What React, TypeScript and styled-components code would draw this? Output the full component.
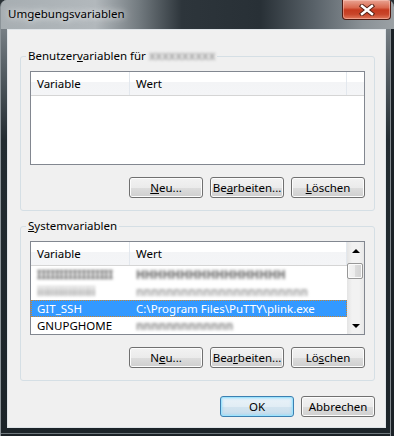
import styled, { createGlobalStyle, css } from "styled-components";

const GlobalStyle = createGlobalStyle`
  html, body {
    margin: 0;
    padding: 0;
    background: #2a3237;
  }
  body {
    font-family: "Noto Sans", "Open Sans", sans-serif;
    font-size: 11.5px;
    color: #000;
  }
  * {
    box-sizing: border-box;
  }
`;

const Window = styled.div`
  width: 394px;
  height: 436px;
  display: flex;
  flex-direction: column;
  padding: 0 8px 8px 6px;
  border-left: 1px solid #8b9398;
  border-radius: 7px 7px 0 0;
  overflow: hidden;
  background: linear-gradient(180deg, #8f969b 0px, #5d666c 60px, #232c31 140px, #1c2429 100%);
  box-shadow: inset -3px 0 0 #1a2126, inset -4px 0 0 #838b90, inset 0 -2px 0 #1a2126,
    inset 0 -3px 0 #6f787d;
`;

const TitleBar = styled.div`
  flex: none;
  height: 29px;
  margin: 0 -8px 0 -6px;
  padding: 0 3px 0 7px;
  display: flex;
  align-items: flex-start;
  justify-content: space-between;
  background: linear-gradient(
    90deg,
    #a7aeb2 0%,
    #b2b8bc 24%,
    #737b80 35%,
    #2d353b 46%,
    #283036 66%,
    #5a636a 80%,
    #8a9196 92%,
    #9ba1a5 100%
  );
`;

const Title = styled.span`
  margin-top: 6px;
  line-height: 16px;
  font-size: 11.5px;
  color: #000;
  text-shadow: 0 0 6px rgba(255, 255, 255, 0.9), 0 0 12px rgba(255, 255, 255, 0.7);
`;

const CloseButton = styled.div`
  width: 49px;
  height: 20px;
  display: flex;
  align-items: center;
  justify-content: center;
  border: 1px solid #4e1a12;
  border-top: none;
  border-radius: 0 0 4px 4px;
  background: linear-gradient(180deg, #e9a493 0%, #d9694f 40%, #c53a1f 52%, #c8452a 75%, #e0785c 100%);
  box-shadow: inset 0 0 0 1px rgba(255, 210, 200, 0.45);
`;

const Client = styled.div`
  flex: 1;
  display: flex;
  flex-direction: column;
  padding: 0 10px 0 12px;
  background: #f0f0f0;
  border: 1px solid #dfe4e8;
`;

const Group = styled.div<{ $top: number }>`
  margin-top: ${({ $top }) => $top}px;
  display: flex;
  flex-direction: column;
  padding: 0 9px 12px;
  border: 1px solid #d5dfe5;
  border-radius: 3px;
`;

const Caption = styled.div`
  align-self: flex-start;
  margin: -9px 0 0 -4px;
  padding: 0 2px;
  line-height: 16px;
  background: #f0f0f0;
  white-space: nowrap;
`;

const Key = styled.span`
  text-decoration: underline;
  text-underline-offset: 1px;
`;

const Blur = styled.span<{ $radius?: number; $tone?: string }>`
  display: inline-block;
  font-weight: 700;
  color: ${({ $tone }) => $tone ?? "#5e5e5e"};
  filter: blur(${({ $radius }) => $radius ?? 1.8}px);
`;

const ListBox = styled.div`
  margin-top: 7px;
  height: 94px;
  display: flex;
  border: 1px solid #828790;
  background: #fff;
`;

const ListBody = styled.div`
  flex: 1;
  min-width: 0;
  display: flex;
  flex-direction: column;
  overflow: hidden;
`;

const HeaderRow = styled.div`
  flex: none;
  height: 24px;
  display: flex;
  border-bottom: 1px solid #d5d5d5;
  background: linear-gradient(180deg, #ffffff 0%, #ffffff 43%, #f3f4f6 44%, #f4f5f7 100%);
`;

const HeaderCell = styled.div<{ $w?: number; $last?: boolean }>`
  ${({ $w }) => ($w ? `width: ${$w}px; flex: none;` : "flex: 1;")}
  padding-left: 6px;
  line-height: 23px;
  border-right: ${({ $last }) => ($last ? "none" : "1px solid #e3e8ee")};
  white-space: nowrap;
`;

const Row = styled.div<{ $selected?: boolean }>`
  flex: none;
  height: 17px;
  display: flex;
  line-height: 17px;
  ${({ $selected }) =>
    $selected &&
    css`
      background: #3399ff;
      color: #fff;
      outline: 1px dotted #c9852f;
      outline-offset: -1px;
    `}
`;

const Cell = styled.div<{ $w?: number }>`
  ${({ $w }) => ($w ? `width: ${$w}px; flex: none;` : "flex: 1;")}
  padding-left: 6px;
  white-space: nowrap;
  overflow: hidden;
`;

const ScrollBar = styled.div`
  width: 17px;
  flex: none;
  display: flex;
  flex-direction: column;
  background: linear-gradient(90deg, #e4e4e4 0%, #f2f2f2 30%, #f2f2f2 70%, #e8e8e8 100%);
`;

const ArrowButton = styled.div`
  height: 17px;
  flex: none;
  display: flex;
  align-items: center;
  justify-content: center;
`;

const Arrow = styled.span<{ $down?: boolean }>`
  width: 0;
  height: 0;
  border-left: 4px solid transparent;
  border-right: 4px solid transparent;
  ${({ $down }) =>
    $down ? "border-top: 4px solid #000;" : "border-bottom: 4px solid #000;"}
`;

const Thumb = styled.div`
  height: 16px;
  margin: 4px 1px 0 0;
  border: 1px solid #979797;
  border-radius: 2px;
  background: linear-gradient(90deg, #f4f4f4 0%, #ececec 50%, #dcdcdc 51%, #d2d2d2 100%);
  box-shadow: inset 0 0 0 1px #fbfbfb;
`;

const Spacer = styled.div`
  flex: 1;
`;

const ButtonRow = styled.div<{ $top: number }>`
  margin-top: ${({ $top }) => $top}px;
  display: flex;
  justify-content: flex-end;
  gap: 7px;
`;

const Button = styled.button<{ $default?: boolean }>`
  width: 74px;
  height: 21px;
  padding: 0;
  font: inherit;
  font-size: 11.5px;
  line-height: 18px;
  color: #000;
  white-space: nowrap;
  border: 1px solid #707070;
  border-radius: 3px;
  background: linear-gradient(180deg, #f2f2f2 0%, #ebebeb 50%, #dddddd 51%, #cfcfcf 100%);
  box-shadow: inset 0 0 0 1px #fcfcfc;
  ${({ $default }) =>
    $default &&
    css`
      border-color: #3c7fb1;
      background: linear-gradient(180deg, #eaf3f9 0%, #e1edf5 50%, #d2e4ef 51%, #c7dceb 100%);
      box-shadow: inset 0 0 0 1px #9ee3fc, inset 0 0 2px 2px rgba(140, 215, 250, 0.45);
    `}
`;

const CloseGlyph = () => (
  <svg width="16" height="12" viewBox="0 0 16 12">
    <path d="M3 2 L13 10 M13 2 L3 10" stroke="#5a2418" strokeWidth="4.4" strokeLinecap="square" />
    <path d="M3 2 L13 10 M13 2 L3 10" stroke="#ffffff" strokeWidth="2.4" strokeLinecap="square" />
  </svg>
);

const ColumnHeader = ({ filler }: { filler?: boolean }) => (
  <HeaderRow>
    <HeaderCell $w={99}>Variable</HeaderCell>
    <HeaderCell $w={217}>Wert</HeaderCell>
    {filler && <HeaderCell $last />}
  </HeaderRow>
);

export default function App() {
  return (
    <>
      <GlobalStyle />
      <Window>
        <TitleBar>
          <Title>Umgebungsvariablen</Title>
          <CloseButton>
            <CloseGlyph />
          </CloseButton>
        </TitleBar>
        <Client>
          <Group $top={26}>
            <Caption>
              Benutzer<Key>v</Key>ariablen für{" "}
              <Blur $radius={1.5} $tone="#a4a4a4">
                xxxxxxxxxx
              </Blur>
            </Caption>
            <ListBox>
              <ListBody>
                <ColumnHeader filler />
              </ListBody>
            </ListBox>
            <ButtonRow $top={12}>
              <Button>
                <Key>N</Key>eu...
              </Button>
              <Button>
                Be<Key>a</Key>rbeiten...
              </Button>
              <Button>
                <Key>L</Key>öschen
              </Button>
            </ButtonRow>
          </Group>

          <Group $top={15}>
            <Caption>
              <Key>S</Key>ystemvariablen
            </Caption>
            <ListBox>
              <ListBody>
                <ColumnHeader />
                <Row>
                  <Cell $w={99}>
                    <Blur>IIIIIIIIIIIIIIIII</Blur>
                  </Cell>
                  <Cell>
                    <Blur>HHHHHHHHHHHHHHHHH</Blur>
                  </Cell>
                </Row>
                <Row>
                  <Cell $w={99}>
                    <Blur $tone="#a0a0a0">iiiiiiiiiiiiiiiii</Blur>
                  </Cell>
                  <Cell>
                    <Blur $tone="#a0a0a0">nnnnnnnnnnnnnnnnnnnnnnn</Blur>
                  </Cell>
                </Row>
                <Row $selected>
                  <Cell $w={99}>GIT_SSH</Cell>
                  <Cell>C:\Program Files\PuTTY\plink.exe</Cell>
                </Row>
                <Row>
                  <Cell $w={99}>GNUPGHOME</Cell>
                  <Cell>
                    <Blur $tone="#8a8a8a">nnnnnnnnnnnnn</Blur>
                  </Cell>
                </Row>
              </ListBody>
              <ScrollBar>
                <ArrowButton>
                  <Arrow />
                </ArrowButton>
                <Thumb />
                <Spacer />
                <ArrowButton>
                  <Arrow $down />
                </ArrowButton>
              </ScrollBar>
            </ListBox>
            <ButtonRow $top={12}>
              <Button>
                N<Key>e</Key>u...
              </Button>
              <Button>
                Bea<Key>r</Key>beiten...
              </Button>
              <Button>
                Lö<Key>s</Key>chen
              </Button>
            </ButtonRow>
          </Group>

          <ButtonRow $top={15}>
            <Button $default>OK</Button>
            <Button>Abbrechen</Button>
          </ButtonRow>
        </Client>
      </Window>
    </>
  );
}
